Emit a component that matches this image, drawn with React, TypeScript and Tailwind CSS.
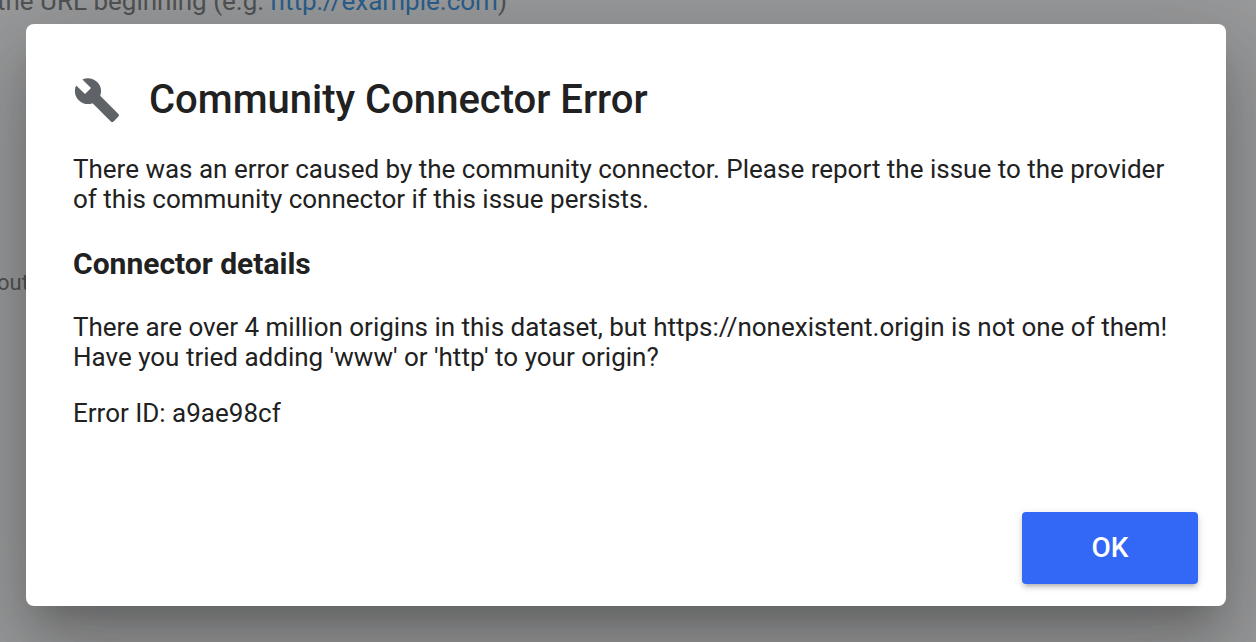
import React from "react";
import { MdBuild } from "react-icons/md";

export default function App() {
  return (
    <div className="relative min-h-screen overflow-hidden bg-[#999a9b] font-[Roboto,sans-serif] text-[#212121]">
      <main className="absolute inset-0 overflow-hidden text-[#505254]">
        <p className="absolute -top-[17px] -left-[3px] text-[26px] leading-9 whitespace-nowrap">
          the URL beginning (e.g. <a href="http://example.com" className="text-[#2a5f8c]">http://example.com</a>)
        </p>
        <p className="absolute top-[267px] -left-[3px] text-[22px] leading-8">out</p>
      </main>
      <div className="relative flex min-h-screen items-center px-[26px] pb-3">
        <section
          role="dialog"
          aria-modal="true"
          aria-labelledby="dialog-title"
          className="mr-1 flex w-full flex-col rounded-lg bg-white pt-12 pr-7 pb-[22px] pl-[47px] shadow-[0_22px_30px_-14px_rgba(0,0,0,0.2),0_48px_76px_6px_rgba(0,0,0,0.14),0_18px_92px_16px_rgba(0,0,0,0.12)]"
        >
          <header className="flex items-center gap-7">
            <MdBuild className="size-12 text-[#5f6368]" />
            <h1 id="dialog-title" className="text-[40px] leading-[56px] font-medium">Community Connector Error</h1>
          </header>
          <p className="mt-[26px] pr-5 text-[26px] leading-[30px]">
            There was an error caused by the community connector. Please report the issue to the provider of this community connector if this issue persists.
          </p>
          <h2 className="mt-[30px] text-[30px] leading-10 font-bold">Connector details</h2>
          <p className="mt-7 pr-5 text-[26px] leading-[30px]">
            There are over 4 million origins in this dataset, but https://nonexistent.origin is not one of them! Have you tried adding 'www' or 'http' to your origin?
          </p>
          <p className="mt-[26px] text-[26px] leading-[30px]">Error ID: a9ae98cf</p>
          <footer className="mt-[84px] flex justify-end">
            <button type="button" className="h-[72px] w-44 rounded bg-[#3367f6] text-[28px] font-medium text-white shadow-[0_6px_2px_-4px_rgba(0,0,0,0.1),0_4px_4px_rgba(0,0,0,0.1),0_2px_10px_rgba(0,0,0,0.12)]">OK</button>
          </footer>
        </section>
      </div>
    </div>
  );
}
